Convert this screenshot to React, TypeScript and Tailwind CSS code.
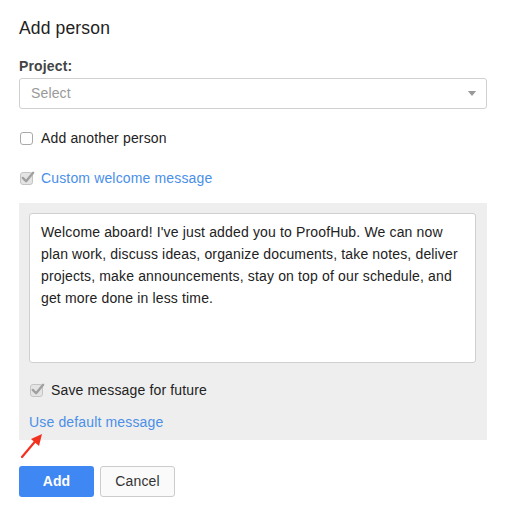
import React from 'react';

const FONT = { fontFamily: '"Liberation Sans", Arial, sans-serif' };

const WELCOME =
  "Welcome aboard! I've just added you to ProofHub. We can now plan work, discuss ideas, organize documents, take notes, deliver projects, make announcements, stay on top of our schedule, and get more done in less time.";

// greyed-out checked box with the check poking past the top right corner
const CheckedBox: React.FC = () => (
  <span className="relative inline-block h-[13px] w-[13px] shrink-0 rounded-[3px] border border-[#c4c4c4] bg-[#e4e4e4]">
    <svg viewBox="0 0 16 16" className="absolute -top-[3px] -right-[3px] h-[15px] w-[15px]">
      <path d="M3 8.5 L6.5 12 L14 3" fill="none" stroke="#a0a0a0" strokeWidth="2.6" strokeLinecap="round" strokeLinejoin="round" />
    </svg>
  </span>
);

const EmptyBox: React.FC = () => (
  <span className="inline-block h-[13px] w-[13px] shrink-0 rounded-[3px] border border-[#a9a9a9] bg-white" />
);

export default function App() {
  return (
    <div className="h-[520px] w-[510px] bg-white px-[19px] pt-[16px] tracking-[0.15px] text-[#222]" style={FONT}>
      <h1 className="text-[17.5px] font-medium leading-[24px] text-[#222]">Add person</h1>

      {/* Project picker */}
      <div className="mt-[17px] text-[14px] font-bold leading-[18px] text-[#444]">Project:</div>
      <div className="mt-[3px] flex h-[31px] w-[468px] items-center justify-between rounded-[3px] border border-[#d0d0d0] bg-white pl-[11px] pr-[9px]">
        <span className="text-[14px] text-[#999]">Select</span>
        <svg viewBox="0 0 10 6" className="h-[5px] w-[10px]">
          <path d="M0 0 H10 L5 6 Z" fill="#9a9a9a" />
        </svg>
      </div>

      <label className="mt-[20px] flex items-center gap-[8px] pl-[1px]">
        <EmptyBox />
        <span className="text-[14px] leading-[18px] text-[#222]">Add another person</span>
      </label>

      <label className="mt-[22px] flex items-center gap-[8px] pl-[1px]">
        <CheckedBox />
        <span className="text-[14px] leading-[18px] text-[#4a8fe8]">Custom welcome message</span>
      </label>

      {/* Welcome message panel */}
      <div className="mt-[16px] w-[468px] bg-[#eeeeee] px-[10px] pt-[10px] pb-[9px]">
        <div className="h-[150px] w-[447px] rounded-[3px] border border-[#cfcfcf] bg-white px-[11px] pt-[7px] text-[14px] leading-[22px] text-[#222]">
          {WELCOME}
        </div>
        <label className="mt-[18px] flex items-center gap-[8px] pl-[1px]">
          <CheckedBox />
          <span className="text-[14px] leading-[18px] text-[#222]">Save message for future</span>
        </label>
        <div className="mt-[14px] text-[14px] leading-[18px] text-[#4a8fe8]">Use default message</div>
      </div>

      {/* annotation arrow */}
      <div className="relative h-0">
        <svg viewBox="0 0 30 30" className="absolute left-0 top-[-6px] h-[30px] w-[30px]">
          <path d="M3 23 L19 4" stroke="#f2321e" strokeWidth="2.2" strokeLinecap="round" />
          <path d="M23 0 L12 5 L20 12 Z" fill="#f2321e" />
        </svg>
      </div>

      <div className="mt-[26px] flex gap-[6px]">
        <button className="h-[31px] w-[75px] rounded-[3px] bg-[#3f87f2] text-[14px] font-bold text-white">Add</button>
        <button className="h-[31px] w-[75px] rounded-[3px] border border-[#cccccc] bg-[#fafafa] text-[14px] text-[#333]">Cancel</button>
      </div>
    </div>
  );
}
